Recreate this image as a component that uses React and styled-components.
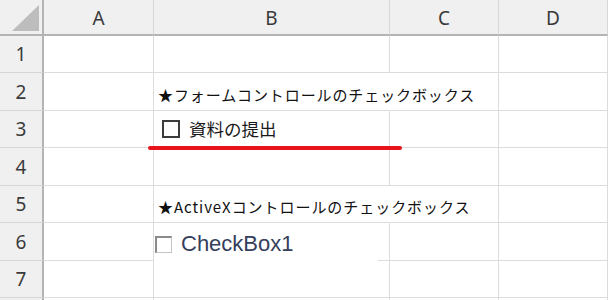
import React from 'react'
import styled, { createGlobalStyle } from 'styled-components'

const GlobalStyle = createGlobalStyle`
  html, body { margin: 0; padding: 0; background: #ffffff; }
  body { font-family: "Noto Sans", "Noto Sans CJK JP", sans-serif; }
`

const columns = ['A', 'B', 'C', 'D']
const rowHeights = [37, 38, 37, 38, 37, 38, 37]

const Sheet = styled.div`
  position: relative;
  width: 608px;
  height: 300px;
  overflow: hidden;
  display: grid;
  grid-template-columns: 44px 110px 236px 109px 109px;
  grid-template-rows: 36px ${rowHeights.map((h) => `${h}px`).join(' ')} 10px;
  background: #ffffff;
`

const Corner = styled.div`
  position: relative;
  background: #f0f0f0;
  border-right: 2px solid #b4b4b4;
  border-bottom: 2px solid #b4b4b4;
  box-sizing: border-box;
  display: flex;
  align-items: flex-end;
  justify-content: flex-end;
  padding: 0 3px 3px 0;
`

const CornerTriangle = styled.div`
  width: 0;
  height: 0;
  border-left: 27px solid transparent;
  border-bottom: 26px solid #bdbdbd;
`

const ColHead = styled.div`
  background: #f0f0f0;
  border-right: 1px solid #d6d6d6;
  border-bottom: 2px solid #b4b4b4;
  box-sizing: border-box;
  display: flex;
  align-items: center;
  justify-content: center;
  padding-top: 2px;
  font-family: "Noto Sans", sans-serif;
  font-size: 19px;
  color: #3a3a3a;
`

const RowHead = styled.div`
  background: #f0f0f0;
  border-right: 2px solid #b4b4b4;
  border-bottom: 1px solid #d6d6d6;
  box-sizing: border-box;
  display: flex;
  align-items: center;
  justify-content: center;
  font-family: "Noto Sans", sans-serif;
  font-size: 19px;
  color: #3a3a3a;
`

const Cell = styled.div`
  position: ${(p) => (p.$spill ? 'relative' : 'static')};
  z-index: ${(p) => (p.$spill ? 1 : 'auto')};
  border-right: 1px solid ${(p) => (p.$spill ? 'transparent' : '#dcdcdc')};
  border-bottom: 1px solid #dcdcdc;
  box-sizing: border-box;
  display: flex;
  align-items: flex-end;
  padding: 0 0 8px 4px;
  white-space: nowrap;
  font-family: "Noto Sans CJK JP", sans-serif;
  color: #111111;
`

const Caption = styled.span`
  font-size: ${(p) => p.$size}px;
  letter-spacing: ${(p) => p.$spacing}px;
  line-height: 1;
`

const FormCheck = styled.label`
  display: flex;
  align-items: center;
  gap: 9px;
  margin-left: 4px;
  margin-bottom: 1px;
  font-size: 17.5px;
  line-height: 1;
  color: #1a1a1a;
`

const FormBox = styled.span`
  width: 18px;
  height: 18px;
  box-sizing: border-box;
  border: 2px solid #3c3c3c;
  background: #ffffff;
`

const Underline = styled.div`
  position: absolute;
  left: 148px;
  top: 146px;
  width: 254px;
  height: 4px;
  border-radius: 2px;
  background: #e8141c;
  z-index: 3;
`

const ActiveX = styled.div`
  position: absolute;
  left: 154px;
  top: 224px;
  width: 224px;
  height: 38px;
  background: #ffffff;
  z-index: 2;
  display: flex;
  align-items: center;
  gap: 9px;
  padding-left: 1px;
  padding-top: 2px;
  box-sizing: border-box;
`

const ActiveXBox = styled.span`
  width: 17px;
  height: 17px;
  box-sizing: border-box;
  border-top: 2px solid #8a8a8a;
  border-left: 2px solid #8a8a8a;
  border-right: 1px solid #c4c4c4;
  border-bottom: 1px solid #c4c4c4;
  background: #ffffff;
`

const ActiveXLabel = styled.span`
  font-family: "Liberation Sans", Arial, sans-serif;
  font-size: 22px;
  color: #34405c;
  line-height: 1;
`

const content = {
  2: <Caption $size={15} $spacing={0.9}>★フォームコントロールのチェックボックス</Caption>,
  3: (
    <FormCheck>
      <FormBox />
      資料の提出
    </FormCheck>
  ),
  5: <Caption $size={15} $spacing={0.95}>★ActiveXコントロールのチェックボックス</Caption>,
}

const App = () => {
  return (
    <>
      <GlobalStyle />
      <Sheet>
        <Corner>
          <CornerTriangle />
        </Corner>
        {columns.map((c) => (
          <ColHead key={c}>{c}</ColHead>
        ))}
        {rowHeights.map((h, i) => {
          const row = i + 1
          return (
            <React.Fragment key={row}>
              <RowHead>{row}</RowHead>
              <Cell />
              <Cell $spill={row === 2 || row === 5}>{content[row]}</Cell>
              <Cell />
              <Cell />
            </React.Fragment>
          )
        })}
        <RowHead />
        <Cell />
        <Cell />
        <Cell />
        <Cell />
        <Underline />
        <ActiveX>
          <ActiveXBox />
          <ActiveXLabel>CheckBox1</ActiveXLabel>
        </ActiveX>
      </Sheet>
    </>
  )
}

export default App
